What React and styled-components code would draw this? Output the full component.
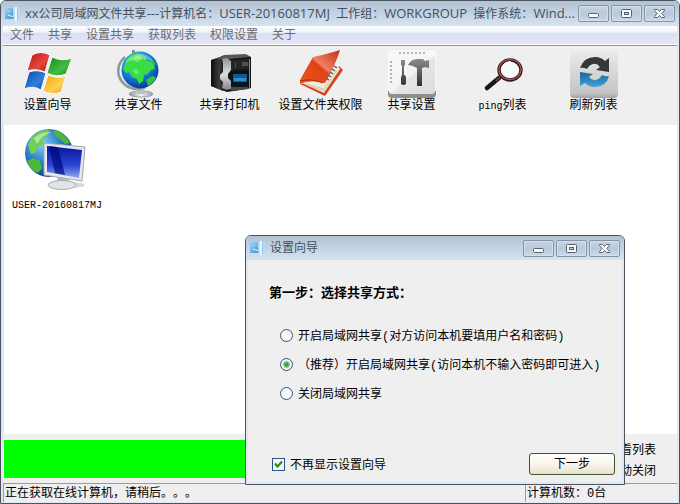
import React, { useState } from 'react';
import styled, { createGlobalStyle } from 'styled-components';

const uiFont = "'Open Sans', 'Noto Sans CJK SC', sans-serif";
const songFont = "'Liberation Mono', 'Noto Sans CJK SC', monospace";

const GlobalStyle = createGlobalStyle`
  * {
    box-sizing: border-box;
  }
  body {
    margin: 0;
    background: #ffffff;
    font-family: ${songFont};
    font-size: 12px;
    line-height: 16px;
    text-spacing-trim: space-all;
    color: #000000;
  }
  button {
    text-spacing-trim: inherit;
  }
`;

const Desktop = styled.div`
  position: relative;
  min-height: 100vh;
  display: flex;
`;

const Window = styled.div`
  flex: 1;
  min-width: 0;
  display: flex;
  flex-direction: column;
  padding: 0 2px 1px;
  border: 1px solid #4b535e;
  border-radius: 6px 6px 0 0;
  background: #dfe7f2;
  overflow: hidden;
`;

const TitleBar = styled.header`
  display: flex;
  align-items: center;
  gap: 4px;
  height: ${(props) => (props.$small ? '24px' : '25px')};
  margin: 0 -2px;
  padding: 0 4px 0 3px;
  background: linear-gradient(#b3c2d2, #c3d3e3 50%, #d6e2f0);
  svg {
    flex: none;
  }
`;

const TitleText = styled.h1`
  flex: 1;
  min-width: 0;
  margin: 0;
  white-space: pre;
  font-family: ${uiFont};
  font-size: 12px;
  line-height: 16px;
  font-weight: normal;
  color: #454f5b;
`;

const TitleLatin = styled.span`
  font-size: 13px;
`;

const Caption = styled.div`
  display: flex;
  gap: 2px;
`;

const CaptionButton = styled.button`
  display: flex;
  align-items: center;
  justify-content: center;
  width: 31px;
  height: 17px;
  padding: 0;
  border: 1px solid #8595a8;
  border-radius: 2px;
  background: linear-gradient(#c6d4e3, #b9c9da 50%, #cbd9e8);
  box-shadow: inset 0 0 0 1px #d3dfeb;
`;

const MenuBar = styled.nav`
  display: flex;
  gap: 14px;
  height: 19px;
  padding: 0 7px;
  background: linear-gradient(#ffffff, #eef1fa 35%, #dadff2 40%, #e2e6f6);
  border-bottom: 1px solid #ffffff;
`;

const MenuItem = styled.button`
  padding: 0;
  border: 0;
  background: none;
  font-family: ${uiFont};
  font-size: 12px;
  line-height: 18px;
  color: #6b6b70;
`;

const Toolbar = styled.div`
  display: flex;
  height: 80px;
  padding-top: 4px;
  border-top: 1px solid #8f939c;
  background: #efefef;
`;

const Tool = styled.button`
  display: flex;
  flex-direction: column;
  align-items: center;
  width: 91px;
  padding: 0 2px 0 0;
  border: 0;
  background: none;
  font-family: ${songFont};
  font-size: 12px;
  line-height: 17px;
  white-space: nowrap;
  color: #000000;
`;

const Latin = styled.span`
  font-size: 10px;
`;

const HostList = styled.main`
  flex: 1;
  margin-left: 1px;
  padding: 2px 4px;
  background: #ffffff;
`;

const Host = styled.figure`
  display: inline-flex;
  flex-direction: column;
  align-items: center;
  gap: 5px;
  margin: 0;
  padding: 0 4px;
  svg {
    margin-right: 6px;
  }
`;

const HostName = styled.figcaption`
  font-size: 10px;
  line-height: 16px;
`;

const Footer = styled.div`
  display: flex;
  align-items: flex-start;
  justify-content: space-between;
  height: 49px;
  padding: 6px 21px 0 1px;
  background: #efefef;
`;

const ScanBar = styled.div`
  flex: 1;
  max-width: 440px;
  height: 38px;
  background: #00ff00;
`;

const FooterLinks = styled.div`
  display: flex;
  flex-direction: column;
  gap: 5px;
  padding-top: 3px;
`;

const FooterButton = styled.button`
  padding: 0;
  border: 0;
  background: none;
  font-family: ${songFont};
  font-size: 12px;
  line-height: 16px;
  text-align: left;
`;

const StatusBar = styled.footer`
  display: grid;
  grid-template-columns: 1fr 152px;
  gap: 2px;
  background: #efefef;
`;

const StatusCell = styled.div`
  height: 19px;
  padding: 2px 1px 0;
  border-top: 1px solid #9a9a9a;
  border-left: 1px solid #9a9a9a;
  white-space: nowrap;
`;

const Dialog = styled.section`
  position: absolute;
  right: 55px;
  bottom: 19px;
  width: 380px;
  padding: 0 2px 2px;
  border: 1px solid #4b535e;
  border-radius: 6px 6px 0 0;
  background: #dfe7f2;
  overflow: hidden;
`;

const DialogBody = styled.form`
  display: flex;
  flex-direction: column;
  padding: 25px 7px 7px 21px;
  background: #efefef;
`;

const StepTitle = styled.h2`
  margin: 0;
  font-size: 13px;
  line-height: 18px;
  font-weight: bold;
`;

const Options = styled.div`
  display: flex;
  flex-direction: column;
  gap: 10px;
  padding: 23px 0 0 11px;
`;

const Choice = styled.label`
  display: flex;
  align-items: center;
  gap: 5px;
  line-height: 16px;
  white-space: nowrap;
`;

const ChoiceText = styled.span`
  padding-top: 3px;
`;

const Radio = styled.input`
  appearance: none;
  flex: none;
  width: 13px;
  height: 13px;
  margin: 0;
  border: 1px solid #2f5484;
  border-radius: 50%;
  background: #f3f7fa;
  &:checked {
    background: radial-gradient(circle, #3f9a3a 0 1px, #8fc98a 3px, #f0f6f0 4px);
  }
`;

const Check = styled.input`
  appearance: none;
  flex: none;
  width: 13px;
  height: 13px;
  margin: 0;
  border: 1px solid #2f5484;
  background: #f3f7f3;
`;

const CheckBox = styled.span`
  display: grid;
  > * {
    grid-area: 1 / 1;
  }
  svg {
    pointer-events: none;
  }
`;

const DialogFooter = styled.div`
  display: flex;
  align-items: center;
  justify-content: space-between;
  padding: 50px 0 0 3px;
`;

const NextButton = styled.button`
  width: 86px;
  height: 22px;
  padding: 2px 0 0;
  border: 1px solid #3c5a2c;
  border-radius: 3px;
  background: linear-gradient(#ffffff, #f8f5ec 50%, #ebe0cd);
  font-family: ${songFont};
  font-size: 12px;
  line-height: 18px;
`;

const AppIcon = () => (
  <svg width="17" height="16" viewBox="0 0 17 16">
    <defs>
      <linearGradient id="app-l" x1="0" y1="0" x2="1" y2="1">
        <stop offset="0" stopColor="#a8d6f2" />
        <stop offset="1" stopColor="#2c8fd0" />
      </linearGradient>
    </defs>
    <path d="M1 2h10v11H1z" fill="url(#app-l)" />
    <path d="M9 2h7v11H9l1-3-1-2z" fill="#b5dcf3" />
    <path d="M12 1v14" stroke="#e9f6fd" strokeWidth="2" />
    <path d="M13.5 2v12" stroke="#8cc5e8" />
    <path d="M4 9q4 3 8 0M5 5v1M12 5v1" stroke="#eaf7ff" fill="none" />
  </svg>
);

const MinimizeIcon = () => (
  <svg width="13" height="11" viewBox="0 0 13 11">
    <rect x="1.5" y="5.5" width="10" height="4" rx="1" fill="#f5f7f9" stroke="#59626d" />
  </svg>
);

const MaximizeIcon = () => (
  <svg width="13" height="11" viewBox="0 0 13 11">
    <rect x="1.5" y="1.5" width="10" height="8" rx="1" fill="#f5f7f9" stroke="#59626d" />
    <rect x="4.5" y="4.5" width="4" height="2" fill="#c3d0dd" stroke="#59626d" />
  </svg>
);

const CloseIcon = () => (
  <svg width="13" height="11" viewBox="0 0 13 11">
    <path
      d="M1.5 1.5h3l2 2 2-2h3v1L8.8 5.5l2.7 3v1h-3l-2-2-2 2h-3v-1l2.7-3-2.7-3z"
      fill="#f5f7f9"
      stroke="#59626d"
    />
  </svg>
);

const WizardIcon = () => (
  <svg width="48" height="48" viewBox="0 0 48 48">
    <defs>
      <linearGradient id="w-r" x1="0" y1="0" x2="1" y2="1">
        <stop offset="0" stopColor="#c3120e" />
        <stop offset=".6" stopColor="#e2463c" />
        <stop offset="1" stopColor="#b7150f" />
      </linearGradient>
      <linearGradient id="w-g" x1="0" y1="0" x2="1" y2="1">
        <stop offset="0" stopColor="#0b8b1b" />
        <stop offset=".6" stopColor="#43bd43" />
        <stop offset="1" stopColor="#078b15" />
      </linearGradient>
      <linearGradient id="w-b" x1="0" y1="0" x2="1" y2="1">
        <stop offset="0" stopColor="#0d46a8" />
        <stop offset=".6" stopColor="#2f7fd8" />
        <stop offset="1" stopColor="#0b4fb0" />
      </linearGradient>
      <linearGradient id="w-y" x1="0" y1="0" x2="1" y2="1">
        <stop offset="0" stopColor="#f0a400" />
        <stop offset=".6" stopColor="#ffd052" />
        <stop offset="1" stopColor="#e59b00" />
      </linearGradient>
    </defs>
    <g stroke="#f9f9f9" strokeWidth="1">
      <path d="M8 5q9-5 18 0l-5 17q-9-4-18-1z" fill="url(#w-r)" />
      <path d="M28 7q10 5 20 1l-6 16q-10 4-19-1z" fill="url(#w-g)" />
      <path d="M5 22q9-3 17 1l-5 17q-8-5-17-1z" fill="url(#w-b)" />
      <path d="M24 25q9 4 18 1l-5 16q-9 4-18-1z" fill="url(#w-y)" />
    </g>
  </svg>
);

const GlobeIcon = () => (
  <svg width="48" height="48" viewBox="0 0 48 48">
    <defs>
      <radialGradient id="globe-sea" cx=".4" cy=".3" r=".75">
        <stop offset="0" stopColor="#55c2fa" />
        <stop offset=".5" stopColor="#1788e2" />
        <stop offset="1" stopColor="#04328d" />
      </radialGradient>
      <linearGradient id="globe-stand" x1="0" y1="0" x2="1" y2="0">
        <stop offset="0" stopColor="#8d949b" />
        <stop offset=".5" stopColor="#f4f4f4" />
        <stop offset="1" stopColor="#969ca2" />
      </linearGradient>
    </defs>
    <ellipse cx="26" cy="44" rx="12" ry="3" fill="url(#globe-stand)" stroke="#9ba0a5" />
    <path d="M23 36h6l1 8h-8z" fill="#b9bec3" />
    <path d="M10 7Q1 15 4 26q4 12 18 13l9-2" fill="none" stroke="#8f979f" strokeWidth="2.5" />
    <path d="M17 0h3v5h-3z" fill="#8a9198" />
    <circle cx="25" cy="20" r="18.5" fill="url(#globe-sea)" />
    <path
      d="M11 11Q15 3 24 3l6 3 2 5 6 1 2 7-4 1-3 4-4 1-1 6-4 3-2-5-5-2-3-5-3 1-3-4z"
      fill="#38dc45"
    />
    <path d="M31 30l6-4 4 1q-2 6-8 9zM34 7q5 3 7 8l-4-1z" fill="#2cc440" />
    <path d="M19 7l5-2 3 4-4 3-5-1zM17 20l5-1 2 4-3 2z" fill="#82f37b" opacity=".65" />
    <path d="M10 13Q15 4 26 4q8 1 12 7-14-5-28 2z" fill="#ffffff" opacity=".3" />
  </svg>
);

const PrinterIcon = () => (
  <svg width="48" height="48" viewBox="0 0 48 48">
    <defs>
      <linearGradient id="pr-side" x1="0" y1="0" x2="1" y2="0">
        <stop offset="0" stopColor="#0c0c0c" />
        <stop offset=".7" stopColor="#3a3c3e" />
        <stop offset="1" stopColor="#1b1c1d" />
      </linearGradient>
      <linearGradient id="pr-trim" x1="0" y1="0" x2="0" y2="1">
        <stop offset="0" stopColor="#8f9194" />
        <stop offset=".5" stopColor="#dfe0e2" />
        <stop offset="1" stopColor="#808387" />
      </linearGradient>
    </defs>
    <path d="M5 10l12-4 24-1 4 2v31l-4 1-20 3-16-6z" fill="#141516" />
    <path d="M5 10l12-2v33L5 36z" fill="url(#pr-side)" />
    <path d="M10 9l8-4 22-1 4 3-21 2z" fill="#55585b" />
    <path d="M16 9l5-1 4 3v9l-3 4v4l3 3v8l-5 1-4-2 1-6-3-3v-4l3-3v-9z" fill="url(#pr-trim)" />
    <path d="M25 10l19-1v10l-19 1z" fill="#232527" />
    <path d="M29 12h1v6h-1zM36 12h6v4h-6z" fill="#4c5054" />
    <path d="M25 21h18v15H25z" fill="#06131e" />
    <path d="M27 24h14v8H27z" fill="#125a8c" />
    <path d="M28 28h12v3H28z" fill="#2593cf" />
    <path d="M43 9h1v29h-1z" fill="#888b8f" />
    <path d="M25 37h17v2l-17 2z" fill="#45484b" />
  </svg>
);

const BookIcon = () => (
  <svg width="48" height="48" viewBox="0 0 48 48">
    <defs>
      <linearGradient id="book" x1="1" y1="0" x2="0" y2="1">
        <stop offset="0" stopColor="#c92f15" />
        <stop offset=".45" stopColor="#ef8063" />
        <stop offset=".5" stopColor="#df4216" />
        <stop offset="1" stopColor="#f0541d" />
      </linearGradient>
    </defs>
    <path d="M3 34l25 12 18-26-4-4-26 16z" fill="#d4431c" />
    <path d="M5 33l22 10 16-24-2-3z" fill="#f3ead9" />
    <path d="M8 35l20 6 13-19M9 34l18 5 13-19" fill="none" stroke="#b7ad9d" strokeWidth=".6" />
    <path d="M3 30L16 7q11-2 27-7-4 14-15 33Q13 29 3 34z" fill="url(#book)" />
    <path d="M3 31q11-3 23 2" fill="none" stroke="#b02c0c" />
    <path d="M37 16l3 2m-5 1l3 2m-5 1l3 2m-5 1l3 2m-5 1l3 2" stroke="#5d5853" strokeWidth="1.4" />
  </svg>
);

const ToolsIcon = () => (
  <svg width="48" height="48" viewBox="0 0 48 48">
    <defs>
      <linearGradient id="tl-bg" x1="0" y1="0" x2="1" y2="1">
        <stop offset="0" stopColor="#fafafa" />
        <stop offset=".5" stopColor="#f3f3f3" />
        <stop offset=".52" stopColor="#e6e6e6" />
        <stop offset="1" stopColor="#dadada" />
      </linearGradient>
      <linearGradient id="tl-m" x1="0" y1="0" x2="0" y2="1">
        <stop offset="0" stopColor="#8b8b8b" />
        <stop offset="1" stopColor="#303235" />
      </linearGradient>
    </defs>
    <rect x="0" y="0" width="48" height="48" rx="3" fill="#f7f7f7" />
    <path d="M0 41h48v3q0 4-4 4H4q-4 0-4-4z" fill="#8f8f8f" />
    <rect x="1" y="5" width="46" height="39" rx="3" fill="url(#tl-bg)" />
    <path d="M11 3h26M3 11v24" stroke="#b5b5b5" strokeWidth="2" strokeDasharray="2 2" />
    <path d="M13 10h4v5l-1 1v9h1l1 2v7q-3 2-5 0v-7l1-2V16l-1-1z" fill="url(#tl-m)" />
    <path d="M20 15q3-6 9-6h6l2 2 4-1v8l-4-1-3 1v18h-5V18q-5-3-9-3z" fill="url(#tl-m)" />
  </svg>
);

const MagnifierIcon = () => (
  <svg width="48" height="48" viewBox="0 0 48 48">
    <path d="M20 28L8 38" stroke="#181616" strokeWidth="4.5" strokeLinecap="round" />
    <path d="M22 26l-5 5" stroke="#5b4240" strokeWidth="2" />
    <ellipse cx="31" cy="20" rx="11" ry="10" fill="#f6f8fa" stroke="#3d1718" strokeWidth="3.4" />
    <ellipse cx="31" cy="19.5" rx="11" ry="10" fill="none" stroke="#a45b5c" strokeWidth="1.2" />
    <path d="M23 19q2-7 9-7" fill="none" stroke="#ffffff" strokeWidth="2" />
  </svg>
);

const RefreshIcon = () => (
  <svg width="48" height="48" viewBox="0 0 48 48">
    <defs>
      <linearGradient id="rf-bg" x1="0" y1="0" x2="0" y2="1">
        <stop offset="0" stopColor="#ececec" />
        <stop offset=".9" stopColor="#c4c4c4" />
        <stop offset="1" stopColor="#a3a3a3" />
      </linearGradient>
      <linearGradient id="rf-b" x1="0" y1="0" x2="0" y2="1">
        <stop offset="0" stopColor="#1d659c" />
        <stop offset="1" stopColor="#3fa3db" />
      </linearGradient>
    </defs>
    <rect width="48" height="48" rx="4" fill="url(#rf-bg)" />
    <path d="M10 18Q14 7 25 7q6 0 10 4l4-3v14l-13-2 4-3q-3-4-7-3-4 1-6 5-4-2-7-1z" fill="#35383b" />
    <path d="M39 26q-3 11-14 11-6 0-10-4l-5 3V22l13 2-4 3q3 4 7 3 4-1 6-5 4 2 7 1z" fill="url(#rf-b)" />
  </svg>
);

const ComputerIcon = () => (
  <svg width="64" height="66" viewBox="0 0 64 66">
    <defs>
      <radialGradient id="pc-sea" cx=".35" cy=".3" r=".75">
        <stop offset="0" stopColor="#8ed0f2" />
        <stop offset=".5" stopColor="#2a7fca" />
        <stop offset="1" stopColor="#0b3a86" />
      </radialGradient>
      <linearGradient id="pc-scr" x1="0" y1="0" x2="0" y2="1">
        <stop offset="0" stopColor="#0615a0" />
        <stop offset=".6" stopColor="#2a45d2" />
        <stop offset="1" stopColor="#8fa9ef" />
      </linearGradient>
    </defs>
    <circle cx="27" cy="26" r="24" fill="url(#pc-sea)" />
    <path d="M9 11Q17 3 27 3l-2 6-5 3 2 5-6 3-3 6-4 1-3-9z" fill="#72cf55" />
    <path d="M31 3q12 2 17 13l-5 1-5-5-4-2zM5 34l6-3 7 3 2 7-4 5Q7 42 5 34z" fill="#4cb83b" />
    <path d="M12 11q8-7 18-6-10 3-15 12z" fill="#d9f5c8" opacity=".6" />
    <ellipse cx="48" cy="58" rx="15" ry="3" fill="#d9d9dc" />
    <path d="M36 50h10l2 7H34z" fill="#b5b8bf" />
    <ellipse cx="40" cy="58" rx="14" ry="4.5" fill="#e1e3e7" stroke="#a9acb2" />
    <path d="M22 16l41 4-3 34-38-6z" fill="#e7e8ec" stroke="#a3a7ae" />
    <path d="M25 19l35 4-3 28-32-6z" fill="url(#pc-scr)" />
    <path d="M27 19l9 1 7 28-10-2z" fill="#00077e" opacity=".7" />
  </svg>
);

const menus = ['文件', '共享', '设置共享', '获取列表', '权限设置', '关于'];

const tools = [
  { label: '设置向导', Icon: WizardIcon },
  { label: '共享文件', Icon: GlobeIcon },
  { label: '共享打印机', Icon: PrinterIcon },
  { label: '设置文件夹权限', Icon: BookIcon },
  { label: '共享设置', Icon: ToolsIcon },
  { latin: 'ping', label: '列表', Icon: MagnifierIcon },
  { label: '刷新列表', Icon: RefreshIcon },
];

const shareModes = [
  '开启局域网共享(对方访问本机要填用户名和密码)',
  '（推荐）开启局域网共享(访问本机不输入密码即可进入)',
  '关闭局域网共享',
];

const mainTitle = (
  <>
    <TitleLatin>xx</TitleLatin>公司局域网文件共享<TitleLatin>---</TitleLatin>计算机名：
    <TitleLatin>USER-20160817MJ</TitleLatin>
    {'  工作组：'}
    <TitleLatin>WORKGROUP</TitleLatin>
    {'  操作系统：'}
    <TitleLatin>Wind...</TitleLatin>
  </>
);

const WindowTitle = ({ title, small }) => (
  <TitleBar $small={small}>
    <AppIcon />
    <TitleText>{title}</TitleText>
    <Caption>
      <CaptionButton aria-label="最小化"><MinimizeIcon /></CaptionButton>
      <CaptionButton aria-label="最大化"><MaximizeIcon /></CaptionButton>
      <CaptionButton aria-label="关闭"><CloseIcon /></CaptionButton>
    </Caption>
  </TitleBar>
);

const WizardDialog = () => {
  const [mode, setMode] = useState(1);
  const [hide, setHide] = useState(true);
  return (
    <Dialog role="dialog" aria-label="设置向导">
      <WindowTitle title="设置向导" small />
      <DialogBody onSubmit={(e) => e.preventDefault()}>
        <StepTitle>第一步：选择共享方式：</StepTitle>
        <Options>
          {shareModes.map((text, i) => (
            <Choice key={text}>
              <Radio type="radio" name="mode" checked={mode === i} onChange={() => setMode(i)} />
              <ChoiceText>{text}</ChoiceText>
            </Choice>
          ))}
        </Options>
        <DialogFooter>
          <Choice>
            <CheckBox>
              <Check type="checkbox" checked={hide} onChange={() => setHide(!hide)} />
              {hide && (
                <svg width="13" height="13" viewBox="0 0 13 13">
                  <path d="M3 5.5l2.5 3L10 3.5" fill="none" stroke="#2c8c2c" strokeWidth="2.2" />
                </svg>
              )}
            </CheckBox>
            <ChoiceText>不再显示设置向导</ChoiceText>
          </Choice>
          <NextButton type="submit">下一步</NextButton>
        </DialogFooter>
      </DialogBody>
    </Dialog>
  );
};

const App = () => (
  <>
    <GlobalStyle />
    <Desktop>
      <Window>
        <WindowTitle title={mainTitle} />
        <MenuBar>
          {menus.map((name) => (
            <MenuItem key={name}>{name}</MenuItem>
          ))}
        </MenuBar>
        <Toolbar>
          {tools.map(({ label, latin, Icon }) => (
            <Tool key={label}>
              <Icon />
              <span>
                {latin && <Latin>{latin}</Latin>}
                {label}
              </span>
            </Tool>
          ))}
        </Toolbar>
        <HostList>
          <Host>
            <ComputerIcon />
            <HostName>USER-20160817MJ</HostName>
          </Host>
        </HostList>
        <Footer>
          <ScanBar />
          <FooterLinks>
            <FooterButton>查看列表</FooterButton>
            <FooterButton>自动关闭</FooterButton>
          </FooterLinks>
        </Footer>
        <StatusBar>
          <StatusCell>正在获取在线计算机，请稍后。。。</StatusCell>
          <StatusCell>计算机数：0台</StatusCell>
        </StatusBar>
      </Window>
      <WizardDialog />
    </Desktop>
  </>
);

export default App;
